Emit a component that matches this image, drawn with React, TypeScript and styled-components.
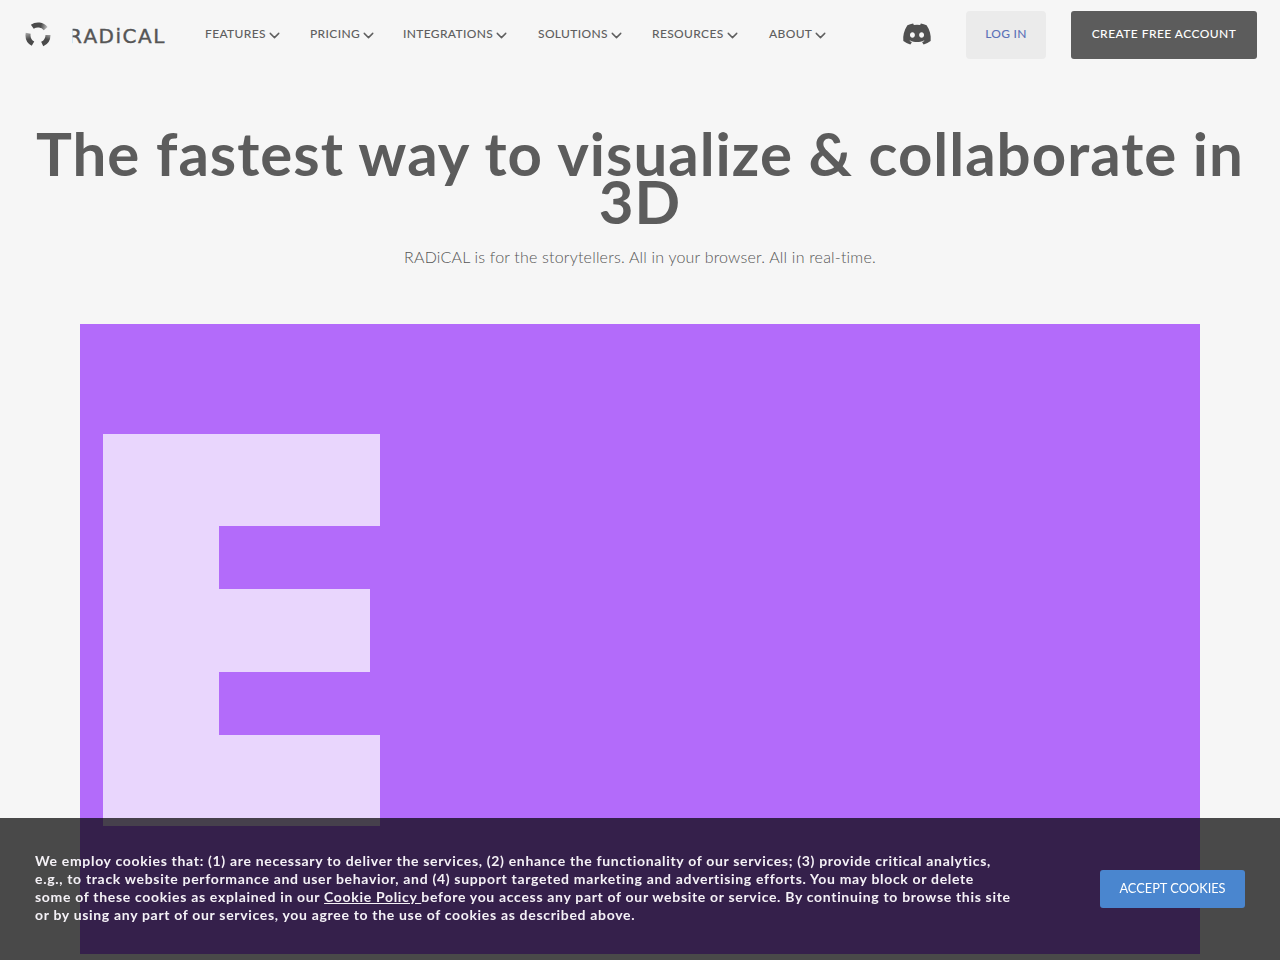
import { ChevronDown } from 'lucide-react';
import { FaDiscord } from 'react-icons/fa';
import styled, { createGlobalStyle } from 'styled-components';

const navItems = [
    { label: 'FEATURES', width: 105 },
    { label: 'PRICING', width: 93 },
    { label: 'INTEGRATIONS', width: 135 },
    { label: 'SOLUTIONS', width: 114 },
    { label: 'RESOURCES', width: 117 },
    { label: 'ABOUT', width: 60 },
];

// bars of the big letter in the video frame, top to bottom
const letterBars = [
    { width: 277, height: 92 },
    { width: 116, height: 63 },
    { width: 267, height: 83 },
    { width: 116, height: 63 },
    { width: 277, height: 91 },
];

const App = () => {
    return (
        <>
            <GlobalStyle />
            <Header>
                <Logo>
                    <svg width="26" height="26" viewBox="0 0 26 26" fill="none" strokeWidth="5">
                        <defs>
                            <linearGradient id="logoTop" gradientUnits="userSpaceOnUse" x1="5" y1="4" x2="22" y2="8">
                                <stop offset="0" stopColor="#4a4a4a" />
                                <stop offset="0.6" stopColor="#4a4a4a" />
                                <stop offset="1" stopColor="#c8c8c8" />
                            </linearGradient>
                            <linearGradient id="logoRight" gradientUnits="userSpaceOnUse" x1="23" y1="9" x2="17" y2="24">
                                <stop offset="0" stopColor="#d0d0d0" />
                                <stop offset="0.5" stopColor="#4a4a4a" />
                                <stop offset="1" stopColor="#4a4a4a" />
                            </linearGradient>
                            <linearGradient id="logoLeft" gradientUnits="userSpaceOnUse" x1="3" y1="9" x2="8" y2="23">
                                <stop offset="0" stopColor="#b8b8b8" />
                                <stop offset="0.55" stopColor="#4a4a4a" />
                                <stop offset="1" stopColor="#4a4a4a" />
                            </linearGradient>
                        </defs>
                        <path d="M7.3 4.8 A10 10 0 0 1 20.7 6.6" stroke="url(#logoTop)" />
                        <path d="M23 13 A10 10 0 0 1 17.2 22.1" stroke="url(#logoRight)" />
                        <path d="M8 21.7 A10 10 0 0 1 3.2 11.3" stroke="url(#logoLeft)" />
                    </svg>
                    <Wordmark>
                        <WordmarkR>R</WordmarkR>ADiCAL
                    </Wordmark>
                </Logo>
                <Nav>
                    {navItems.map((item) => (
                        <NavItem key={item.label} $width={item.width}>
                            {item.label}
                            <ChevronDown size={17} strokeWidth={2} />
                        </NavItem>
                    ))}
                </Nav>
                <DiscordLink>
                    <FaDiscord size={30} />
                </DiscordLink>
                <LoginButton>LOG IN</LoginButton>
                <CreateButton>CREATE FREE ACCOUNT</CreateButton>
            </Header>

            <Hero>
                <Title>The fastest way to visualize &amp; collaborate in 3D</Title>
                <Subtitle>RADiCAL is for the storytellers. All in your browser. All in real-time.</Subtitle>
            </Hero>

            <Video>
                <Letter>
                    {letterBars.map((bar, i) => (
                        <LetterBar key={i} $width={bar.width} $height={bar.height} />
                    ))}
                </Letter>
            </Video>

            <CookieBar>
                <CookieText>
                    We employ cookies that: (1) are necessary to deliver the services, (2) enhance the functionality of
                    our services; (3) provide critical analytics,
                    <br />
                    e.g., to track website performance and user behavior, and (4) support targeted marketing and
                    advertising efforts. You may block or delete
                    <br />
                    some of these cookies as explained in our <CookieLink>Cookie Policy </CookieLink>before you access
                    any part of our website or service. By continuing to browse this site
                    <br />
                    or by using any part of our services, you agree to the use of cookies as described above.
                </CookieText>
                <AcceptButton>ACCEPT COOKIES</AcceptButton>
            </CookieBar>
        </>
    );
};

const GlobalStyle = createGlobalStyle`
    html, body {
        margin: 0;
        padding: 0;
        height: 960px;
        overflow: hidden;
        background: #f6f6f6;
        font-family: 'Lato', 'Liberation Sans', sans-serif;
        color: #5c5c5c;
    }
`;

// top menu
const Header = styled.header`
    display: flex;
    align-items: center;
    height: 70px;
    padding: 0 23px 0 25px;
    box-sizing: border-box;
`;

const Logo = styled.div`
    display: flex;
    align-items: center;
    gap: 17px;
    width: 180px;
    flex-shrink: 0;
`;

const Wordmark = styled.span`
    margin-top: 2px;
    font-family: 'DejaVu Sans', sans-serif;
    font-size: 20px;
    letter-spacing: 1.5px;
    color: #555;
    line-height: 1;
    -webkit-text-stroke: 0.4px #555;
`;

// the logo's R has no stem, so its left edge is cut off
const WordmarkR = styled.span`
    display: inline-block;
    clip-path: inset(0 0 0 30%);
`;

const Nav = styled.nav`
    display: flex;
    align-items: center;
    width: 698px;
    padding-bottom: 4px;
    flex-shrink: 0;
`;

const NavItem = styled.div<{ $width: number }>`
    display: flex;
    align-items: center;
    width: ${(p) => p.$width}px;
    flex-shrink: 0;
    font-size: 12px;
    font-weight: 500;
    letter-spacing: 0.35px;
    color: #5f5f5f;
    white-space: nowrap;

    svg {
        margin-top: 4px;
        flex-shrink: 0;
    }
`;

const DiscordLink = styled.a`
    display: flex;
    margin-left: -1px;
    padding-bottom: 2px;
    color: #505050;
    width: 64px;
    flex-shrink: 0;
`;

const LoginButton = styled.button`
    width: 80px;
    height: 48px;
    margin-right: 25px;
    padding: 0 0 3px;
    border: none;
    border-radius: 4px;
    background: #ebebeb;
    color: #5d72b8;
    font-family: inherit;
    font-size: 12px;
    font-weight: 500;
    letter-spacing: 0.3px;
    flex-shrink: 0;
`;

const CreateButton = styled.button`
    width: 186px;
    height: 48px;
    padding: 0 0 3px;
    border: none;
    border-radius: 3px;
    background: #5c5c5c;
    color: #fff;
    font-family: inherit;
    font-size: 12px;
    font-weight: 500;
    letter-spacing: 0.45px;
    flex-shrink: 0;
`;

// heading
const Hero = styled.section`
    text-align: center;
    padding: 0 30px;
`;

const Title = styled.h1`
    margin: 0;
    padding-top: 59px;
    font-size: 60px;
    font-weight: 700;
    line-height: 48px;
    letter-spacing: 1px;
    color: #5c5c5c;
`;

const Subtitle = styled.p`
    margin: 0;
    padding-top: 20px;
    font-size: 16px;
    font-weight: 300;
    line-height: 24px;
    letter-spacing: 0.2px;
    color: #555;
`;

// video frame
const Video = styled.div`
    width: 1120px;
    height: 630px;
    margin: 55px auto 0;
    padding: 110px 0 0 23px;
    box-sizing: border-box;
    background: #b36bfa;
`;

const Letter = styled.div`
    display: flex;
    flex-direction: column;
`;

const LetterBar = styled.div<{ $width: number; $height: number }>`
    width: ${(p) => p.$width}px;
    height: ${(p) => p.$height}px;
    background: #e9d6fd;
`;

// cookie notice
const CookieBar = styled.div`
    position: fixed;
    left: 0;
    right: 0;
    bottom: 0;
    height: 142px;
    display: flex;
    align-items: flex-start;
    justify-content: space-between;
    padding: 34px 35px 0;
    box-sizing: border-box;
    background: rgba(0, 0, 0, 0.7);
`;

const CookieText = styled.p`
    margin: 0;
    width: 985px;
    font-size: 14px;
    font-weight: 700;
    line-height: 18px;
    letter-spacing: 0.68px;
    white-space: nowrap;
    color: #f4f1f6;
`;

const CookieLink = styled.a`
    text-decoration: underline;
`;

const AcceptButton = styled.button`
    width: 145px;
    height: 38px;
    margin-top: 18px;
    padding: 0 0 2px;
    border: none;
    border-radius: 3px;
    background: #4a86cf;
    color: #fff;
    font-family: inherit;
    font-size: 12.8px;
    font-weight: 400;
    flex-shrink: 0;
`;

export default App;
